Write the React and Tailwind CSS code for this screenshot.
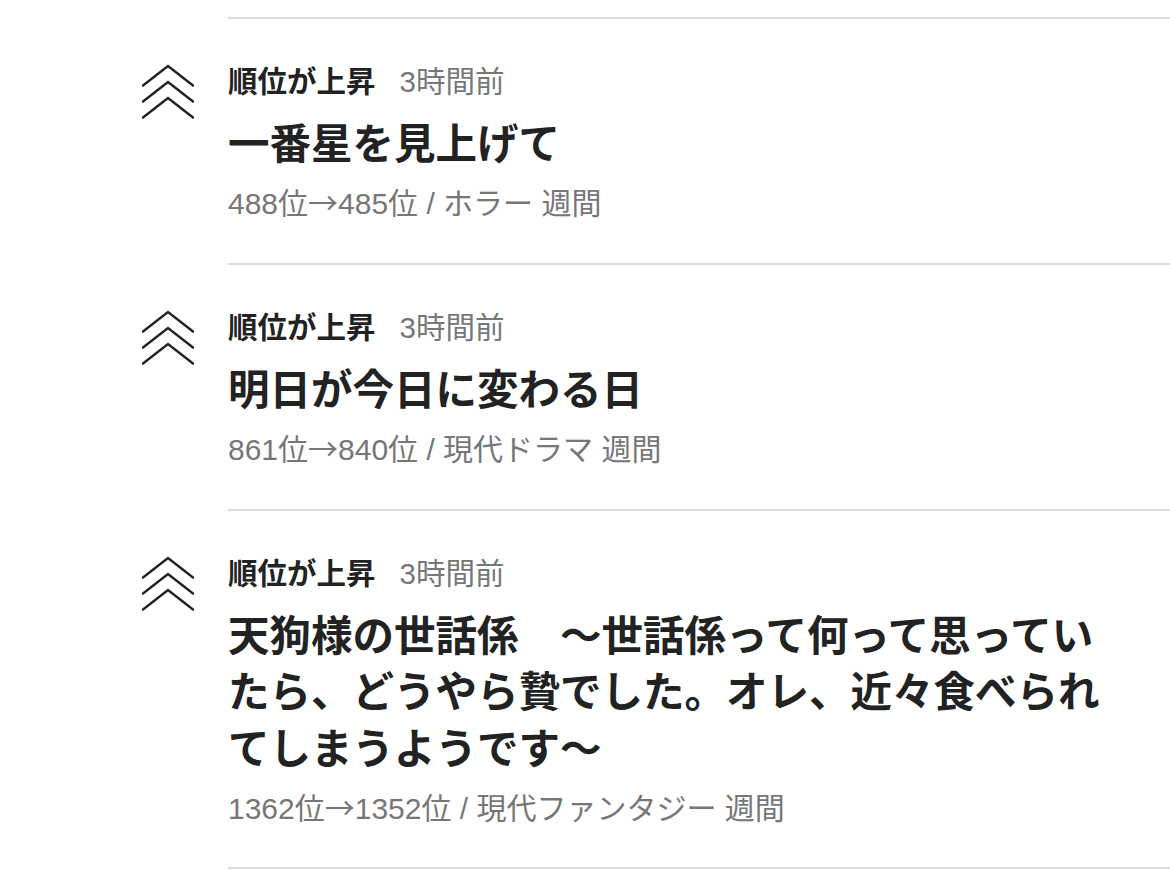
const items = [
  {
    title: '一番星を見上げて',
    from: '488位',
    to: '485位 / ホラー 週間',
  },
  {
    title: '明日が今日に変わる日',
    from: '861位',
    to: '840位 / 現代ドラマ 週間',
  },
  {
    title: '天狗様の世話係　〜世話係って何って思っていたら、どうやら贄でした。オレ、近々食べられてしまうようです〜',
    from: '1362位',
    to: '1352位 / 現代ファンタジー 週間',
  },
];

function RankUpIcon() {
  return (
    <svg width="54" height="56" viewBox="0 0 54 56" fill="none" stroke="#222" strokeWidth="2.4" strokeLinecap="round" strokeLinejoin="miter">
      <polyline points="2,21.5 27,2 52,21.5" />
      <polyline points="2,37.5 27,18 52,37.5" />
      <polyline points="2,53.5 27,34 52,53.5" />
    </svg>
  );
}

function RankItem({ title, from, to }) {
  return (
    <div className="flex items-start">
      <div className="w-[87px] shrink-0 pt-[47px]">
        <RankUpIcon />
      </div>
      <div className="flex-1 border-t-2 border-[#dedede] pt-[43px] pb-[39px] pr-[40px]">
        <div className="flex items-center leading-[40px] text-[29.5px]">
          <span className="font-bold text-[#222]">順位が上昇</span>
          <span className="ml-[24px] text-[#777]">3時間前</span>
        </div>
        <h2 className="mt-[14.5px] text-[41.5px] leading-[56.5px] font-bold text-[#222]">
          {title}
        </h2>
        <p className="mt-[11px] text-[30px] leading-[40px] text-[#777]">
          {from}
          <span className="leading-none" style={{ fontFamily: '"Noto Sans CJK JP", sans-serif' }}>→</span>
          {to}
        </p>
      </div>
    </div>
  );
}

export default function App() {
  return (
    <div
      className="w-[1170px] h-[870px] overflow-hidden bg-white pl-[141px] pt-[17px]"
      style={{ fontFamily: '"Liberation Sans", "Noto Sans CJK JP", sans-serif' }}
    >
      {items.map((item, i) => (
        <RankItem key={i} {...item} />
      ))}
      {/* top edge of the next entry */}
      <div className="ml-[87px] -mt-[1px] border-t-2 border-[#dedede]" />
    </div>
  );
}
